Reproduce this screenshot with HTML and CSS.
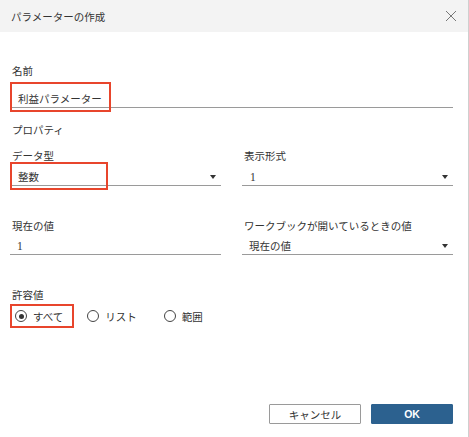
FILE: index.html
```html
<!DOCTYPE html>
<html lang="ja">
<head>
<meta charset="utf-8">
<link rel="stylesheet" href="styles.css">
</head>
<body>
<div class="dialog">
  <div class="header">
    <span class="title">パラメーターの作成</span>
    <svg class="close" width="12" height="12" viewBox="0 0 12 12"><path d="M1 1L11 11M11 1L1 11" stroke="#777" stroke-width="1" fill="none"/></svg>
  </div>
  <div class="content">
    <div class="label">名前</div>
    <div class="field name-field">
      <span class="value">利益パラメーター</span>
      <div class="mark mark-name"></div>
    </div>
    <div class="label section">プロパティ</div>
    <div class="row row-type">
      <div class="col">
        <div class="label">データ型</div>
        <div class="field select">
          <span class="value">整数</span>
          <span class="arrow"></span>
          <div class="mark mark-type"></div>
        </div>
      </div>
      <div class="col">
        <div class="label">表示形式</div>
        <div class="field select">
          <span class="value num">1</span>
          <span class="arrow"></span>
        </div>
      </div>
    </div>
    <div class="row row-current">
      <div class="col">
        <div class="label">現在の値</div>
        <div class="field plain">
          <span class="value num">1</span>
        </div>
      </div>
      <div class="col">
        <div class="label">ワークブックが開いているときの値</div>
        <div class="field select plain">
          <span class="value">現在の値</span>
          <span class="arrow"></span>
        </div>
      </div>
    </div>
    <div class="label allowed">許容値</div>
    <div class="radios">
      <label class="radio"><span class="dot checked"></span>すべて</label>
      <label class="radio"><span class="dot"></span>リスト</label>
      <label class="radio"><span class="dot"></span>範囲</label>
      <div class="mark mark-radio"></div>
    </div>
    <div class="buttons">
      <button class="btn cancel">キャンセル</button>
      <button class="btn ok">OK</button>
    </div>
  </div>
</div>
</body>
</html>
```
FILE: styles.css
```css
* { box-sizing: border-box; }
html, body { margin: 0; padding: 0; background: #fff; }
body {
  font-family: "Noto Sans CJK JP", "Noto Sans", sans-serif;
  color: #333;
  width: 469px;
  height: 437px;
  overflow: hidden;
}
.dialog {
  width: 469px;
  height: 437px;
  border-right: 1px solid #cfcfcf;
  position: relative;
}
.header {
  height: 32px;
  background: #f3f3f3;
  display: flex;
  align-items: center;
  justify-content: space-between;
  padding: 0 11px 0 11px;
}
.title { font-size: 10.5px; color: #333; }
.content {
  padding: 31px 15px 0 10px;
}
.label {
  font-size: 10.5px;
  line-height: 16px;
  color: #333;
  padding-left: 2px;
}
.field {
  position: relative;
  height: 17px;
  line-height: 16px;
  border-bottom: 1px solid #9a9a9a;
  font-size: 10.5px;
  display: flex;
  align-items: center;
  padding-left: 8px;
}
.num { font-family: "Liberation Serif", "DejaVu Serif", serif; font-size: 11.5px; }
.name-field { margin-top: 12px; }
.section { margin-top: 14px; }
.row { display: flex; gap: 21px; }
.col { flex: 1; }
.row-type { margin-top: 10px; }
.row-type .field { margin-top: 5px; }
.row-current { margin-top: 32px; }
.row-current .field { margin-top: 2px; padding-left: 7px; height: 19px; padding-top: 1px; }
.select { justify-content: space-between; padding-right: 5px; }
.value { display: block; }
.arrow {
  width: 0; height: 0;
  border-left: 3.5px solid transparent;
  border-right: 3.5px solid transparent;
  border-top: 4px solid #333;
}
.mark {
  position: absolute;
  border: 2px solid #e8452c;
  pointer-events: none;
}
.mark-name { left: 0; top: -9px; width: 101px; height: 30px; }
.mark-type { left: 0; top: -7px; width: 98px; height: 28px; }
.allowed { margin-top: 32px; }
.radios {
  position: relative;
  display: flex;
  align-items: center;
  height: 24px;
  margin-top: 1px;
  font-size: 10.5px;
}
.radio {
  display: flex;
  align-items: center;
  gap: 6px;
  margin-left: 5px;
  margin-right: 24px;
}
.radio + .radio { margin-left: 0; }
.radio:nth-child(2) { margin-right: 27px; }
.dot {
  width: 12px; height: 12px;
  border: 1px solid #444;
  border-radius: 50%;
  position: relative;
}
.dot.checked::after {
  content: "";
  position: absolute;
  left: 2.5px; top: 2.5px;
  width: 5px; height: 5px;
  border-radius: 50%;
  background: #333;
}
.mark-radio { left: 0; top: 0; width: 64px; height: 24px; }
.buttons {
  display: flex;
  justify-content: flex-end;
  gap: 10px;
  margin-top: 76px;
}
.btn {
  height: 20px;
  font-family: inherit;
  font-size: 10.5px;
  border-radius: 1px;
  padding: 0;
  cursor: pointer;
}
.cancel {
  width: 92px;
  background: #fff;
  border: 1px solid #9a9a9a;
  color: #333;
}
.ok {
  width: 82px;
  background: #2c618f;
  border: 1px solid #2c618f;
  color: #fff;
  font-weight: bold;
  font-family: "Liberation Sans", "Noto Sans", sans-serif;
}
```
